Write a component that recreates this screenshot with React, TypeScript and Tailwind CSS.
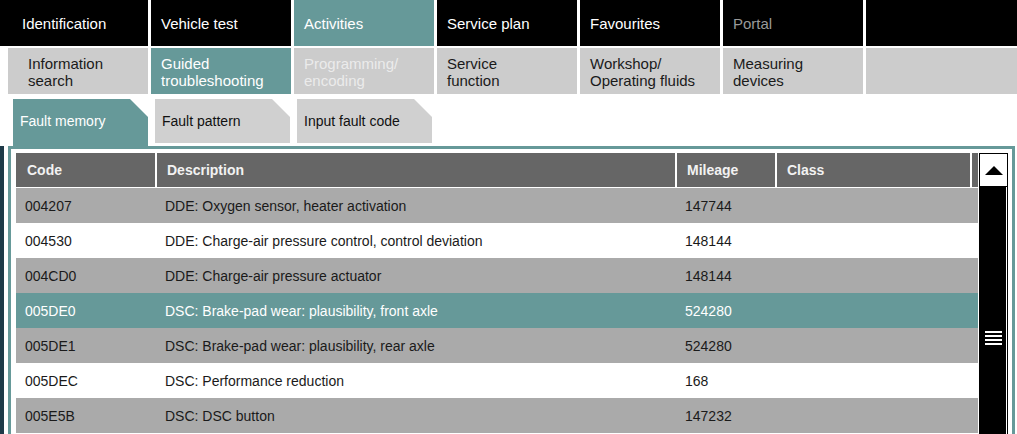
import React from 'react';

const topTabs = [
  { label: 'Identification' },
  { label: 'Vehicle test' },
  { label: 'Activities', active: true },
  { label: 'Service plan' },
  { label: 'Favourites' },
  { label: 'Portal', disabled: true },
];

const subTabs = [
  { label: ['Information', 'search'] },
  { label: ['Guided', 'troubleshooting'], active: true },
  { label: ['Programming/', 'encoding'], disabled: true },
  { label: ['Service', 'function'] },
  { label: ['Workshop/', 'Operating fluids'] },
  { label: ['Measuring', 'devices'] },
];

const faults = [
  { code: '004207', desc: 'DDE: Oxygen sensor, heater activation', mileage: '147744' },
  { code: '004530', desc: 'DDE: Charge-air pressure control, control deviation', mileage: '148144' },
  { code: '004CD0', desc: 'DDE: Charge-air pressure actuator', mileage: '148144' },
  { code: '005DE0', desc: 'DSC: Brake-pad wear: plausibility, front axle', mileage: '524280', selected: true },
  { code: '005DE1', desc: 'DSC: Brake-pad wear: plausibility, rear axle', mileage: '524280' },
  { code: '005DEC', desc: 'DSC: Performance reduction', mileage: '168' },
  { code: '005E5B', desc: 'DSC: DSC button', mileage: '147232' },
];

const cols = 'grid grid-cols-[141px_520px_100px_195px_6px]';

export default function App() {
  return (
    <div className="w-[1017px] h-[434px] overflow-hidden bg-white font-['Liberation_Sans',Arial,sans-serif] flex flex-col">
      {/* main navigation */}
      <div className="flex h-[46px] gap-[3px] shrink-0">
        {topTabs.map((t, i) => (
          <div
            key={t.label}
            className={`${i === 0 ? 'w-[148px] pl-[22px]' : 'w-[140px] pl-[10px]'} ${t.active ? 'bg-[#669999]' : 'bg-black'} ${t.disabled ? 'text-[#9a9a9a]' : 'text-white'} flex items-center pt-[2px] text-[15px]`}
          >
            {t.label}
          </div>
        ))}
        <div className="flex-1 bg-black" />
      </div>

      {/* sub navigation */}
      <div className="flex h-[46px] gap-[3px] pl-[8px] mt-[2px] shrink-0">
        {subTabs.map((t, i) => (
          <div
            key={t.label[0]}
            className={`w-[140px] ${i === 0 ? 'pl-[20px]' : 'pl-[10px]'} ${t.active ? 'bg-[#669999] text-white' : 'bg-[#cccccc]'} ${t.disabled ? 'text-[#ebebeb]' : t.active ? '' : 'text-[#1a1a1a]'} flex flex-col justify-center pt-px text-[15px] leading-[17px]`}
          >
            <span>{t.label[0]}</span>
            <span>{t.label[1]}</span>
          </div>
        ))}
        <div className="flex-1 bg-[#cccccc]" />
      </div>

      {/* card tabs */}
      <div className="flex items-start gap-[7px] pl-[13px] mt-[5px] h-[47px] shrink-0">
        <div className="w-[135px] h-[47px] pb-[3px] pl-[7px] flex items-center bg-[#669999] text-white text-[14px] [clip-path:polygon(0_0,calc(100%_-_18px)_0,100%_18px,100%_100%,0_100%)]">
          Fault memory
        </div>
        <div className="w-[135px] h-[44px] pl-[7px] flex items-center bg-[#d0d0d0] text-[#111] text-[14px] [clip-path:polygon(0_0,calc(100%_-_18px)_0,100%_18px,100%_100%,0_100%)]">
          Fault pattern
        </div>
        <div className="w-[135px] h-[44px] pl-[7px] flex items-center bg-[#d0d0d0] text-[#111] text-[14px] [clip-path:polygon(0_0,calc(100%_-_18px)_0,100%_18px,100%_100%,0_100%)]">
          Input fault code
        </div>
      </div>

      {/* fault memory panel */}
      <div className="flex flex-1 min-h-0">
        <div className="w-[4px] bg-[#1e3a48]" />
        <div className="ml-[4px] w-[1007px] border-[3px] border-b-0 border-[#669999] pt-[4px] pl-[5px] pr-[4px] flex">
          <div className="w-[962px] text-[14px]">
            <div className={`${cols} h-[34px] bg-[#666666] text-[#f2f2f2] font-bold mb-px`}>
              <div className="border-r-2 border-white pl-[11px] flex items-center">Code</div>
              <div className="border-r-2 border-white pl-[10px] flex items-center">Description</div>
              <div className="border-r-2 border-white pl-[10px] flex items-center">Mileage</div>
              <div className="border-r-2 border-white pl-[10px] flex items-center">Class</div>
              <div />
            </div>
            {faults.map((f, i) => (
              <div
                key={f.code}
                className={`${cols} h-[35px] pt-[2px] ${f.selected ? 'bg-[#669999] text-white' : i % 2 === 0 ? 'bg-[#aaaaaa] text-[#1a1a1a]' : 'bg-white text-[#1a1a1a]'}`}
              >
                <div className="pl-[9px] flex items-center">{f.code}</div>
                <div className="pl-[8px] flex items-center">{f.desc}</div>
                <div className="pl-[8px] flex items-center">{f.mileage}</div>
                <div />
                <div />
              </div>
            ))}
          </div>

          {/* scrollbar */}
          <div className="ml-px w-[29px] flex flex-col">
            <div className="h-[34px] bg-white border border-black flex items-center justify-center">
              <svg width="18" height="9" viewBox="0 0 18 9">
                <polygon points="9,0 18,9 0,9" fill="#000" />
              </svg>
            </div>
            <div className="flex-1 bg-black shadow-[inset_-1px_0_0_#000,inset_-2px_0_0_#fff] pt-[144px] flex flex-col items-center gap-[2px]">
              <div className="w-[17px] h-[2px] bg-white" />
              <div className="w-[17px] h-[2px] bg-white" />
              <div className="w-[17px] h-[2px] bg-white" />
              <div className="w-[17px] h-[2px] bg-white" />
            </div>
          </div>
        </div>
      </div>
    </div>
  );
}
